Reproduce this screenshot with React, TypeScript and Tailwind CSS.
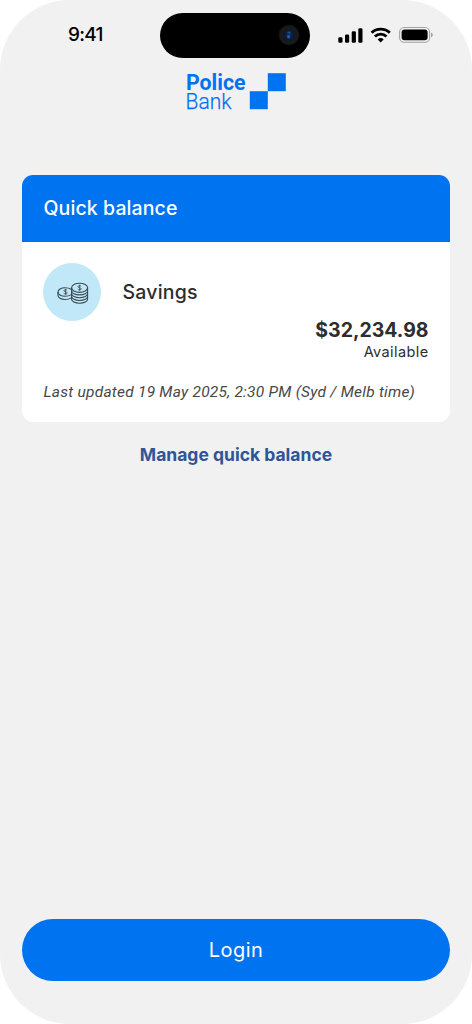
import React from 'react';

const StatusIcons: React.FC = () => (
  <svg width="96" height="18" viewBox="338 26 96 18" aria-hidden="true">
    <rect x="338.3" y="37.3" width="4.2" height="5.4" rx="1.3" />
    <rect x="345" y="34.4" width="4.2" height="8.3" rx="1.3" />
    <rect x="351.7" y="31.3" width="4.2" height="11.4" rx="1.3" />
    <rect x="358.3" y="28.2" width="4.2" height="14.5" rx="1.3" />
    <g fill="none" stroke="black" strokeWidth="2.9">
      <path d="M371.6 32.8a13 13 0 0 1 18.2 0" />
      <path d="M374.9 36.5a8.2 8.2 0 0 1 11.6 0" />
    </g>
    <path d="M377.7 39.4a4.3 4.3 0 0 1 6 0l-3 3z" />
    <rect x="399.6" y="27.5" width="30" height="14.8" rx="4.6" fill="none" stroke="#a3a3a3" strokeWidth="1.1" />
    <rect x="401.6" y="29.5" width="26" height="10.8" rx="3" />
    <path d="M431 32.6v4.6c1-.4 1.8-1.3 1.8-2.3s-.8-1.9-1.8-2.3z" fill="#a3a3a3" />
  </svg>
);

const StatusBar: React.FC = () => (
  <div className="flex items-start h-[58px]">
    <div className="w-[160px] pl-[68px] pt-[21px] text-[19px] leading-[28px] font-medium tracking-[-0.7px] text-black">
      9:41
    </div>
    <div className="mt-[13px] w-[149.5px] h-[44.5px] rounded-full bg-black flex items-center justify-end pr-[10px]">
      <svg width="22" height="22" viewBox="0 0 22 22" aria-hidden="true">
        <defs>
          <radialGradient id="lens">
            <stop offset="0" stopColor="#0d2f5c" />
            <stop offset="0.4" stopColor="#0b1b33" />
            <stop offset="0.55" stopColor="#15181d" />
            <stop offset="0.8" stopColor="#1b1b1d" />
            <stop offset="1" stopColor="#000000" />
          </radialGradient>
        </defs>
        <circle cx="11" cy="11" r="11" fill="url(#lens)" />
        <ellipse cx="11" cy="8.6" rx="1.8" ry="1" fill="#1e4d82" />
        <ellipse cx="10.6" cy="12.8" rx="1.5" ry="1.8" fill="#1a5fae" />
      </svg>
    </div>
    <div className="ml-[28.5px] mt-[26px]">
      <StatusIcons />
    </div>
  </div>
);

const Logo: React.FC = () => (
  <svg
    className="mx-auto mt-[12px] block overflow-visible"
    width="100"
    height="42"
    viewBox="186 70 100 42"
    fill="#0073f0"
    role="img"
    aria-label="Police Bank"
  >
    <text x="186" y="89.8" fontSize="22.5" fontWeight="700" textLength="59.5" lengthAdjust="spacingAndGlyphs" className="font-['Roboto',sans-serif]">
      Police
    </text>
    <text x="185.6" y="109" fontSize="22" fontWeight="300" textLength="46" lengthAdjust="spacingAndGlyphs" className="font-['Roboto',sans-serif]" stroke="#0073f0" strokeWidth="0.25">
      Bank
    </text>
    <rect x="267.8" y="73.2" width="18" height="18" />
    <rect x="249.8" y="91.2" width="18" height="18" />
  </svg>
);

const CoinsIcon: React.FC = () => (
  <svg width="32" height="24" viewBox="0 0 32 24" fill="none" stroke="#3b4a50" strokeWidth="1.1" aria-hidden="true">
    <path d="M14.2 8.3C12.8 7.3 10.7 6.7 8 6.7c-4 0-7 1.9-7 4.3s3 4.3 7 4.3c2.5 0 4.6-.6 6.2-1.7" />
    <path d="M1 11v3.4c0 2.3 3 4.1 7 4.1 2.5 0 4.6-.6 6.2-1.6" />
    <ellipse cx="22.6" cy="6.8" rx="8" ry="4.6" />
    <path d="M14.6 6.8v11.4c0 2.3 3.5 4 8 4s8-1.7 8-4V6.8" />
    <path d="M14.6 9.9c0 2.3 3.5 4 8 4s8-1.7 8-4" />
    <path d="M14.6 12.7c0 2.3 3.5 4 8 4s8-1.7 8-4" />
    <path d="M14.6 15.5c0 2.3 3.5 4 8 4s8-1.7 8-4" />
    <g strokeWidth="0.8">
      <path d="M10.1 9.2c-1-.8-3.3-.6-3.3.6 0 1.3 3.5.8 3.5 2.2 0 1.2-2.5 1.4-3.6.5M8.5 7.9v6" />
      <path d="M24.2 5.1c-1-.8-3.3-.6-3.3.6 0 1.3 3.5.8 3.5 2.2 0 1.2-2.5 1.4-3.6.5M22.6 3.8v6" />
    </g>
  </svg>
);

const BalanceCard: React.FC = () => (
  <section className="mt-[62.5px] h-[247px] flex flex-col rounded-[11px] overflow-hidden bg-white text-[#2d2d2d]">
    <h2 className="h-[67px] shrink-0 flex items-center px-[21.5px] pt-[2px] bg-[#0073f0] text-white text-[19.5px] font-medium tracking-[0.1px]">
      Quick balance
    </h2>
    <div className="px-[21.5px] pt-[21.5px]">
      <div className="flex items-center h-[58px] -ml-[0.5px]">
        <div className="w-[58px] h-[58px] pt-[2px] pl-[2px] rounded-full bg-[#c0e8f8] flex items-center justify-center">
          <CoinsIcon />
        </div>
        <span className="ml-[21.5px] pt-[2px] text-[19.5px] font-medium tracking-[0.2px]">Savings</span>
      </div>
      <div className="-mt-[3px] text-right">
        <div className="text-[19.5px] leading-[24px] font-bold">$32,234.98</div>
        <div className="text-[14.5px] leading-[20px] tracking-[0.4px]">Available</div>
      </div>
      <p className="mt-[20px] font-['Roboto',sans-serif] text-[15.5px] leading-[20px] italic tracking-[0.24px] text-[#474747] whitespace-nowrap">
        Last updated 19 May 2025, 2:30 PM (Syd / Melb time)
      </p>
    </div>
  </section>
);

const App: React.FC = () => {
  return (
    <div className="bg-white">
      <main className="w-[472px] h-[1024px] flex flex-col overflow-hidden rounded-[70px] bg-[#f1f1f1] font-['Inter',sans-serif]">
        <StatusBar />
        <div className="flex-1 flex flex-col px-[22px] pb-[43.5px]">
          <Logo />
          <BalanceCard />
          <button className="self-center mt-[20px] h-[26px] text-[17.5px] leading-[26px] font-bold text-[#2f5597] whitespace-nowrap">
            Manage quick balance
          </button>
          <button className="mt-auto w-full h-[61.5px] rounded-full bg-[#0073f0] text-white text-[20px] tracking-[0.5px]">
            Login
          </button>
        </div>
      </main>
    </div>
  );
};

export default App;
